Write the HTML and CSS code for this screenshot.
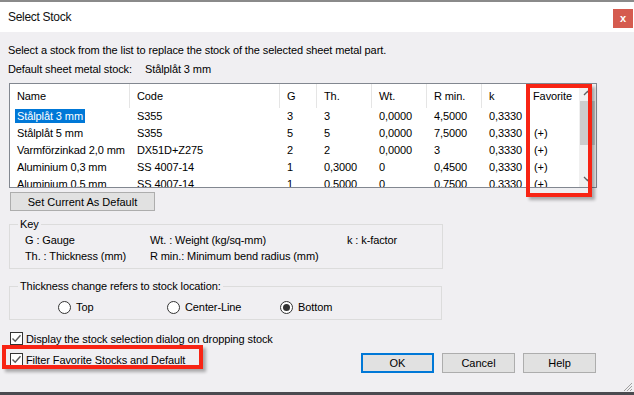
FILE: index.html
```html
<!DOCTYPE html>
<html lang="en">
<head>
  <meta charset="UTF-8" />
  <title>Select Stock</title>
  <link rel="stylesheet" href="styles.css">
</head>
<body>
  <div class="window">
    <div class="titlebar">
      <span class="title">Select Stock</span>
      <span class="close">x</span>
    </div>

    <div class="dialog">
      <p class="intro">Select a stock from the list to replace the stock of the selected sheet metal part.</p>
      <p class="default-line"><span class="default-label">Default sheet metal stock:</span>Stålplåt 3 mm</p>

      <div class="list">
        <div class="list-main">
          <div class="row head">
            <span>Name</span><span>Code</span><span>G</span><span>Th.</span><span>Wt.</span><span>R min.</span><span>k</span><span>Favorite</span>
          </div>
          <div class="row">
            <span><em class="selected">Stålplåt 3 mm</em></span><span>S355</span><span>3</span><span>3</span><span>0,0000</span><span>4,5000</span><span>0,3330</span><span></span>
          </div>
          <div class="row">
            <span>Stålplåt 5 mm</span><span>S355</span><span>5</span><span>5</span><span>0,0000</span><span>7,5000</span><span>0,3330</span><span>(+)</span>
          </div>
          <div class="row">
            <span>Varmförzinkad 2,0 mm</span><span>DX51D+Z275</span><span>2</span><span>2</span><span>0,0000</span><span>3</span><span>0,3330</span><span>(+)</span>
          </div>
          <div class="row">
            <span>Aluminium 0,3 mm</span><span>SS 4007-14</span><span>1</span><span>0,3000</span><span>0</span><span>0,4500</span><span>0,3330</span><span>(+)</span>
          </div>
          <div class="row">
            <span>Aluminium 0,5 mm</span><span>SS 4007-14</span><span>1</span><span>0,5000</span><span>0</span><span>0,7500</span><span>0,3330</span><span>(+)</span>
          </div>
        </div>
        <div class="scrollbar">
          <div class="arrow">
            <svg width="9" height="6" viewBox="0 0 9 6"><path d="M1 5 L4.5 1.5 L8 5" fill="none" stroke="#606060" stroke-width="1.3"/></svg>
          </div>
          <div class="thumb"></div>
          <div class="track"></div>
          <div class="arrow">
            <svg width="9" height="6" viewBox="0 0 9 6"><path d="M1 1 L4.5 4.5 L8 1" fill="none" stroke="#606060" stroke-width="1.3"/></svg>
          </div>
        </div>
        <div class="mark mark-favorite"></div>
      </div>

      <button class="btn btn-set">Set Current As Default</button>

      <fieldset class="group key">
        <legend>Key</legend>
        <div class="key-grid">
          <span>G : Gauge</span><span>Wt. : Weight (kg/sq-mm)</span><span>k : k-factor</span>
          <span>Th. : Thickness (mm)</span><span>R min.: Minimum bend radius (mm)</span><span></span>
        </div>
      </fieldset>

      <fieldset class="group thickness">
        <legend>Thickness change refers to stock location:</legend>
        <div class="radios">
          <label class="radio"><i class="dot"></i>Top</label>
          <label class="radio"><i class="dot"></i>Center-Line</label>
          <label class="radio"><i class="dot on"></i>Bottom</label>
        </div>
      </fieldset>

      <div class="bottom">
        <div class="checks">
          <label class="check">
            <i class="box"><svg width="11" height="11" viewBox="0 0 11 11"><path d="M1.5 5.5 L4.2 8.3 L9.5 2.2" fill="none" stroke="#5a5a5a" stroke-width="1.4"/></svg></i>
            Display the stock selection dialog on dropping stock
          </label>
          <label class="check">
            <i class="box"><svg width="11" height="11" viewBox="0 0 11 11"><path d="M1.5 5.5 L4.2 8.3 L9.5 2.2" fill="none" stroke="#5a5a5a" stroke-width="1.4"/></svg></i>
            Filter Favorite Stocks and Default
            <span class="mark mark-filter"></span>
          </label>
        </div>
        <div class="buttons">
          <button class="btn btn-ok">OK</button>
          <button class="btn">Cancel</button>
          <button class="btn">Help</button>
        </div>
      </div>

      <svg class="grip" width="12" height="12" viewBox="0 0 12 12">
        <path d="M11 3 L3 11 M11 6 L6 11 M11 9 L9 11" stroke="#a0a0a0" stroke-width="1"/>
      </svg>
    </div>

    <div class="statusbar"></div>
  </div>
</body>
</html>
```

FILE: styles.css
```css
* {
  margin: 0;
  padding: 0;
  box-sizing: border-box;
}

body {
  width: 634px;
  height: 395px;
  overflow: hidden;
  font-family: "Liberation Sans", Arial, sans-serif;
  font-size: 11px;
  letter-spacing: -0.1px;
  color: #000;
  background: #f0eff2;
}

.window {
  border-top: 2px solid #8a8a8a;
  height: 395px;
  display: flex;
  flex-direction: column;
}

.titlebar {
  height: 30px;
  background: #fff;
  display: flex;
  align-items: center;
  justify-content: space-between;
  padding-left: 8px;
}

.title {
  font-size: 12px;
  letter-spacing: -0.3px;
  color: #111;
}

.close {
  width: 20px;
  height: 19px;
  margin-right: 1px;
  margin-top: 3px;
  background: #d55b4f;
  color: #fff;
  font-weight: bold;
  font-size: 11px;
  line-height: 18px;
  text-align: center;
}

.dialog {
  position: relative;
  height: 360px;
  padding: 0 8px;
}

.intro {
  margin-top: 11px;
  line-height: 14px;
}

.default-line {
  margin-top: 5px;
  line-height: 14px;
}

.default-label {
  display: inline-block;
  width: 137px;
}

/* stock list */
.list {
  position: relative;
  margin-left: 1px;
  margin-top: 7px;
  width: 588px;
  height: 105px;
  border: 1px solid #828790;
  background: #fff;
  display: flex;
}

.list-main {
  flex: 1;
  overflow: hidden;
}

.row {
  display: grid;
  grid-template-columns: 120px 150px 37px 55px 55px 55px 45px 52px;
  height: 17px;
  line-height: 17px;
  white-space: nowrap;
}

.row span {
  padding-left: 7px;
  overflow: hidden;
}

.row.head {
  height: 24px;
  line-height: 24px;
}

.row.head span {
  border-right: 1px solid #e5e5e5;
  padding-left: 7px;
}

.row.head span:last-child {
  border-right: none;
  padding-left: 6px;
}

.selected {
  font-style: normal;
  background: #0078d7;
  color: #fff;
  margin-left: -2px;
  padding: 1px 2px;
}

.scrollbar {
  width: 17px;
  background: #f0f0f0;
  display: flex;
  flex-direction: column;
}

.scrollbar .arrow {
  height: 17px;
  display: flex;
  align-items: center;
  justify-content: center;
}

.scrollbar .thumb {
  height: 44px;
  margin: 0 1px;
  background: #cdcdcd;
}

.scrollbar .track {
  flex: 1;
}

/* red annotation frames */
.mark {
  position: absolute;
  border: 4px solid #f82414;
  box-shadow: 3px 3px 3px rgba(0, 0, 0, 0.3);
}

.mark-favorite {
  left: 516px;
  top: 0;
  width: 66px;
  height: 113px;
}

.mark-filter {
  left: -8px;
  top: -4px;
  width: 201px;
  height: 24px;
}

/* buttons */
.btn {
  font-family: inherit;
  font-size: 11px;
  color: #000;
  background: #e1e1e1;
  border: 1px solid #adadad;
  height: 20px;
}

.btn-set {
  display: block;
  margin: 4px 0 0 2px;
  width: 145px;
  height: 19px;
}

/* group boxes */
.group {
  border: 1px solid #dcdcdc;
  margin-left: 1px;
  padding: 0 0 0 8px;
}

.group legend {
  padding: 0 2px;
  line-height: 13px;
}

.key {
  width: 434px;
  margin-top: 7px;
  padding-bottom: 4px;
}

.key-grid {
  display: grid;
  grid-template-columns: 125px 197px auto;
  padding-left: 7px;
  line-height: 16px;
  margin-top: 1px;
}

.thickness {
  width: 433px;
  margin-top: 11px;
  padding-top: 6px;
  padding-bottom: 4px;
}

.radios {
  display: grid;
  grid-template-columns: 109px 113px auto;
  padding-left: 40px;
  line-height: 16px;
}

.radio {
  display: flex;
  align-items: center;
  gap: 5px;
}

.dot {
  width: 13px;
  height: 13px;
  border: 1px solid #333;
  border-radius: 50%;
  background: #fff;
  display: flex;
  align-items: center;
  justify-content: center;
}

.dot.on::after {
  content: '';
  width: 7px;
  height: 7px;
  border-radius: 50%;
  background: #333;
}

/* checkboxes and dialog buttons */
.bottom {
  display: flex;
  margin-top: 8px;
}

.checks {
  padding-left: 2px;
}

.check {
  position: relative;
  display: flex;
  align-items: center;
  gap: 3px;
  height: 21px;
}

.box {
  width: 13px;
  height: 13px;
  border: 1px solid #333;
  background: #fff;
  display: flex;
  align-items: center;
  justify-content: center;
}

.buttons {
  margin-left: auto;
  margin-right: 30px;
  margin-top: 25px;
  display: flex;
  gap: 8px;
}

.buttons .btn {
  width: 73px;
}

.btn-ok {
  border: 2px solid #0078d7;
}

.grip {
  position: absolute;
  right: 1px;
  bottom: 0;
}

.statusbar {
  height: 3px;
  background: #4b4b50;
}
```
